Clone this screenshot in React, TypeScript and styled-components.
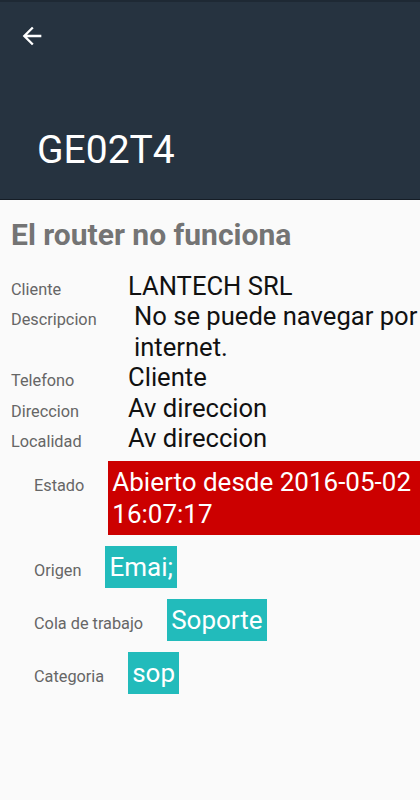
import React from "react";
import styled, { createGlobalStyle } from "styled-components";

const GlobalStyle = createGlobalStyle`
  html, body {
    margin: 0;
    padding: 0;
    background: #fafafa;
    font-family: Roboto, "Liberation Sans", Arial, sans-serif;
  }
`;

const Screen = styled.div`
  width: 420px;
  min-height: 800px;
  overflow: hidden;
  background: #fafafa;
`;

const Header = styled.header`
  height: 197px;
  background: #263340;
  border-top: 2px solid #1e2934;
  border-bottom: 1px solid #151d26;
  display: flex;
  flex-direction: column;
`;

const Toolbar = styled.div`
  height: 68px;
  padding-left: 18px;
  display: flex;
  align-items: center;
`;

const BackButton = styled.button`
  border: 0;
  padding: 0;
  background: transparent;
  width: 28px;
  height: 28px;
  color: #ffffff;
  cursor: pointer;
`;

const Title = styled.h1`
  margin: 57px 0 0 37px;
  font-size: 39px;
  line-height: 46px;
  font-weight: 400;
  color: #ffffff;
`;

const Content = styled.main`
  padding-top: 17px;
`;

const Subject = styled.h2`
  margin: 0 0 0 11px;
  font-size: 30px;
  line-height: 36px;
  font-weight: 700;
  color: #747474;
`;

const InfoList = styled.div`
  margin-top: 18px;
  padding-left: 11px;
  display: grid;
  grid-template-columns: 117px 1fr;
  align-items: baseline;
`;

const InfoLabel = styled.span`
  font-size: 16.3px;
  color: #666666;
`;

const InfoValue = styled.span<{ $indent?: number }>`
  font-size: 25.6px;
  line-height: 30.4px;
  color: #111111;
  padding-left: ${(p) => p.$indent ?? 0}px;
  margin-right: -4px;
`;

const StatusList = styled.div`
  margin-top: 8px;
  display: flex;
  flex-direction: column;
  gap: 11px;
`;

const StatusRow = styled.div`
  display: flex;
  align-items: baseline;
  gap: 24px;
  padding-left: 34px;
`;

const StatusLabel = styled.span`
  flex-shrink: 0;
  font-size: 16.3px;
  color: #666666;
`;

const Badge = styled.span<{ $tone: "red" | "teal" }>`
  display: inline-block;
  padding: 5px 4px;
  font-size: 26px;
  line-height: 32px;
  color: #ffffff;
  background: ${(p) => (p.$tone === "red" ? "#cc0000" : "#22bbbb")};
`;

const info = [
  { label: "Cliente", value: "LANTECH SRL" },
  { label: "Descripcion", value: "No se puede navegar por internet.", indent: 6 },
  { label: "Telefono", value: "Cliente" },
  { label: "Direccion", value: "Av direccion" },
  { label: "Localidad", value: "Av direccion" },
];

const status: { label: string; value: string; tone: "red" | "teal" }[] = [
  { label: "Estado", value: "Abierto desde 2016-05-02 16:07:17", tone: "red" },
  { label: "Origen", value: "Emai;", tone: "teal" },
  { label: "Cola de trabajo", value: "Soporte", tone: "teal" },
  { label: "Categoria", value: "sop", tone: "teal" },
];

export default function App() {
  return (
    <Screen>
      <GlobalStyle />
      <Header>
        <Toolbar>
          <BackButton aria-label="Volver">
            <svg width="28" height="28" viewBox="0 0 24 24" fill="currentColor">
              <path d="M20 11H7.83l5.59-5.59L12 4l-8 8 8 8 1.41-1.41L7.83 13H20v-2z" />
            </svg>
          </BackButton>
        </Toolbar>
        <Title>GE02T4</Title>
      </Header>
      <Content>
        <Subject>El router no funciona</Subject>
        <InfoList>
          {info.map((row) => (
            <React.Fragment key={row.label}>
              <InfoLabel>{row.label}</InfoLabel>
              <InfoValue $indent={row.indent}>{row.value}</InfoValue>
            </React.Fragment>
          ))}
        </InfoList>
        <StatusList>
          {status.map((row) => (
            <StatusRow key={row.label}>
              <StatusLabel>{row.label}</StatusLabel>
              <Badge $tone={row.tone}>{row.value}</Badge>
            </StatusRow>
          ))}
        </StatusList>
      </Content>
    </Screen>
  );
}
